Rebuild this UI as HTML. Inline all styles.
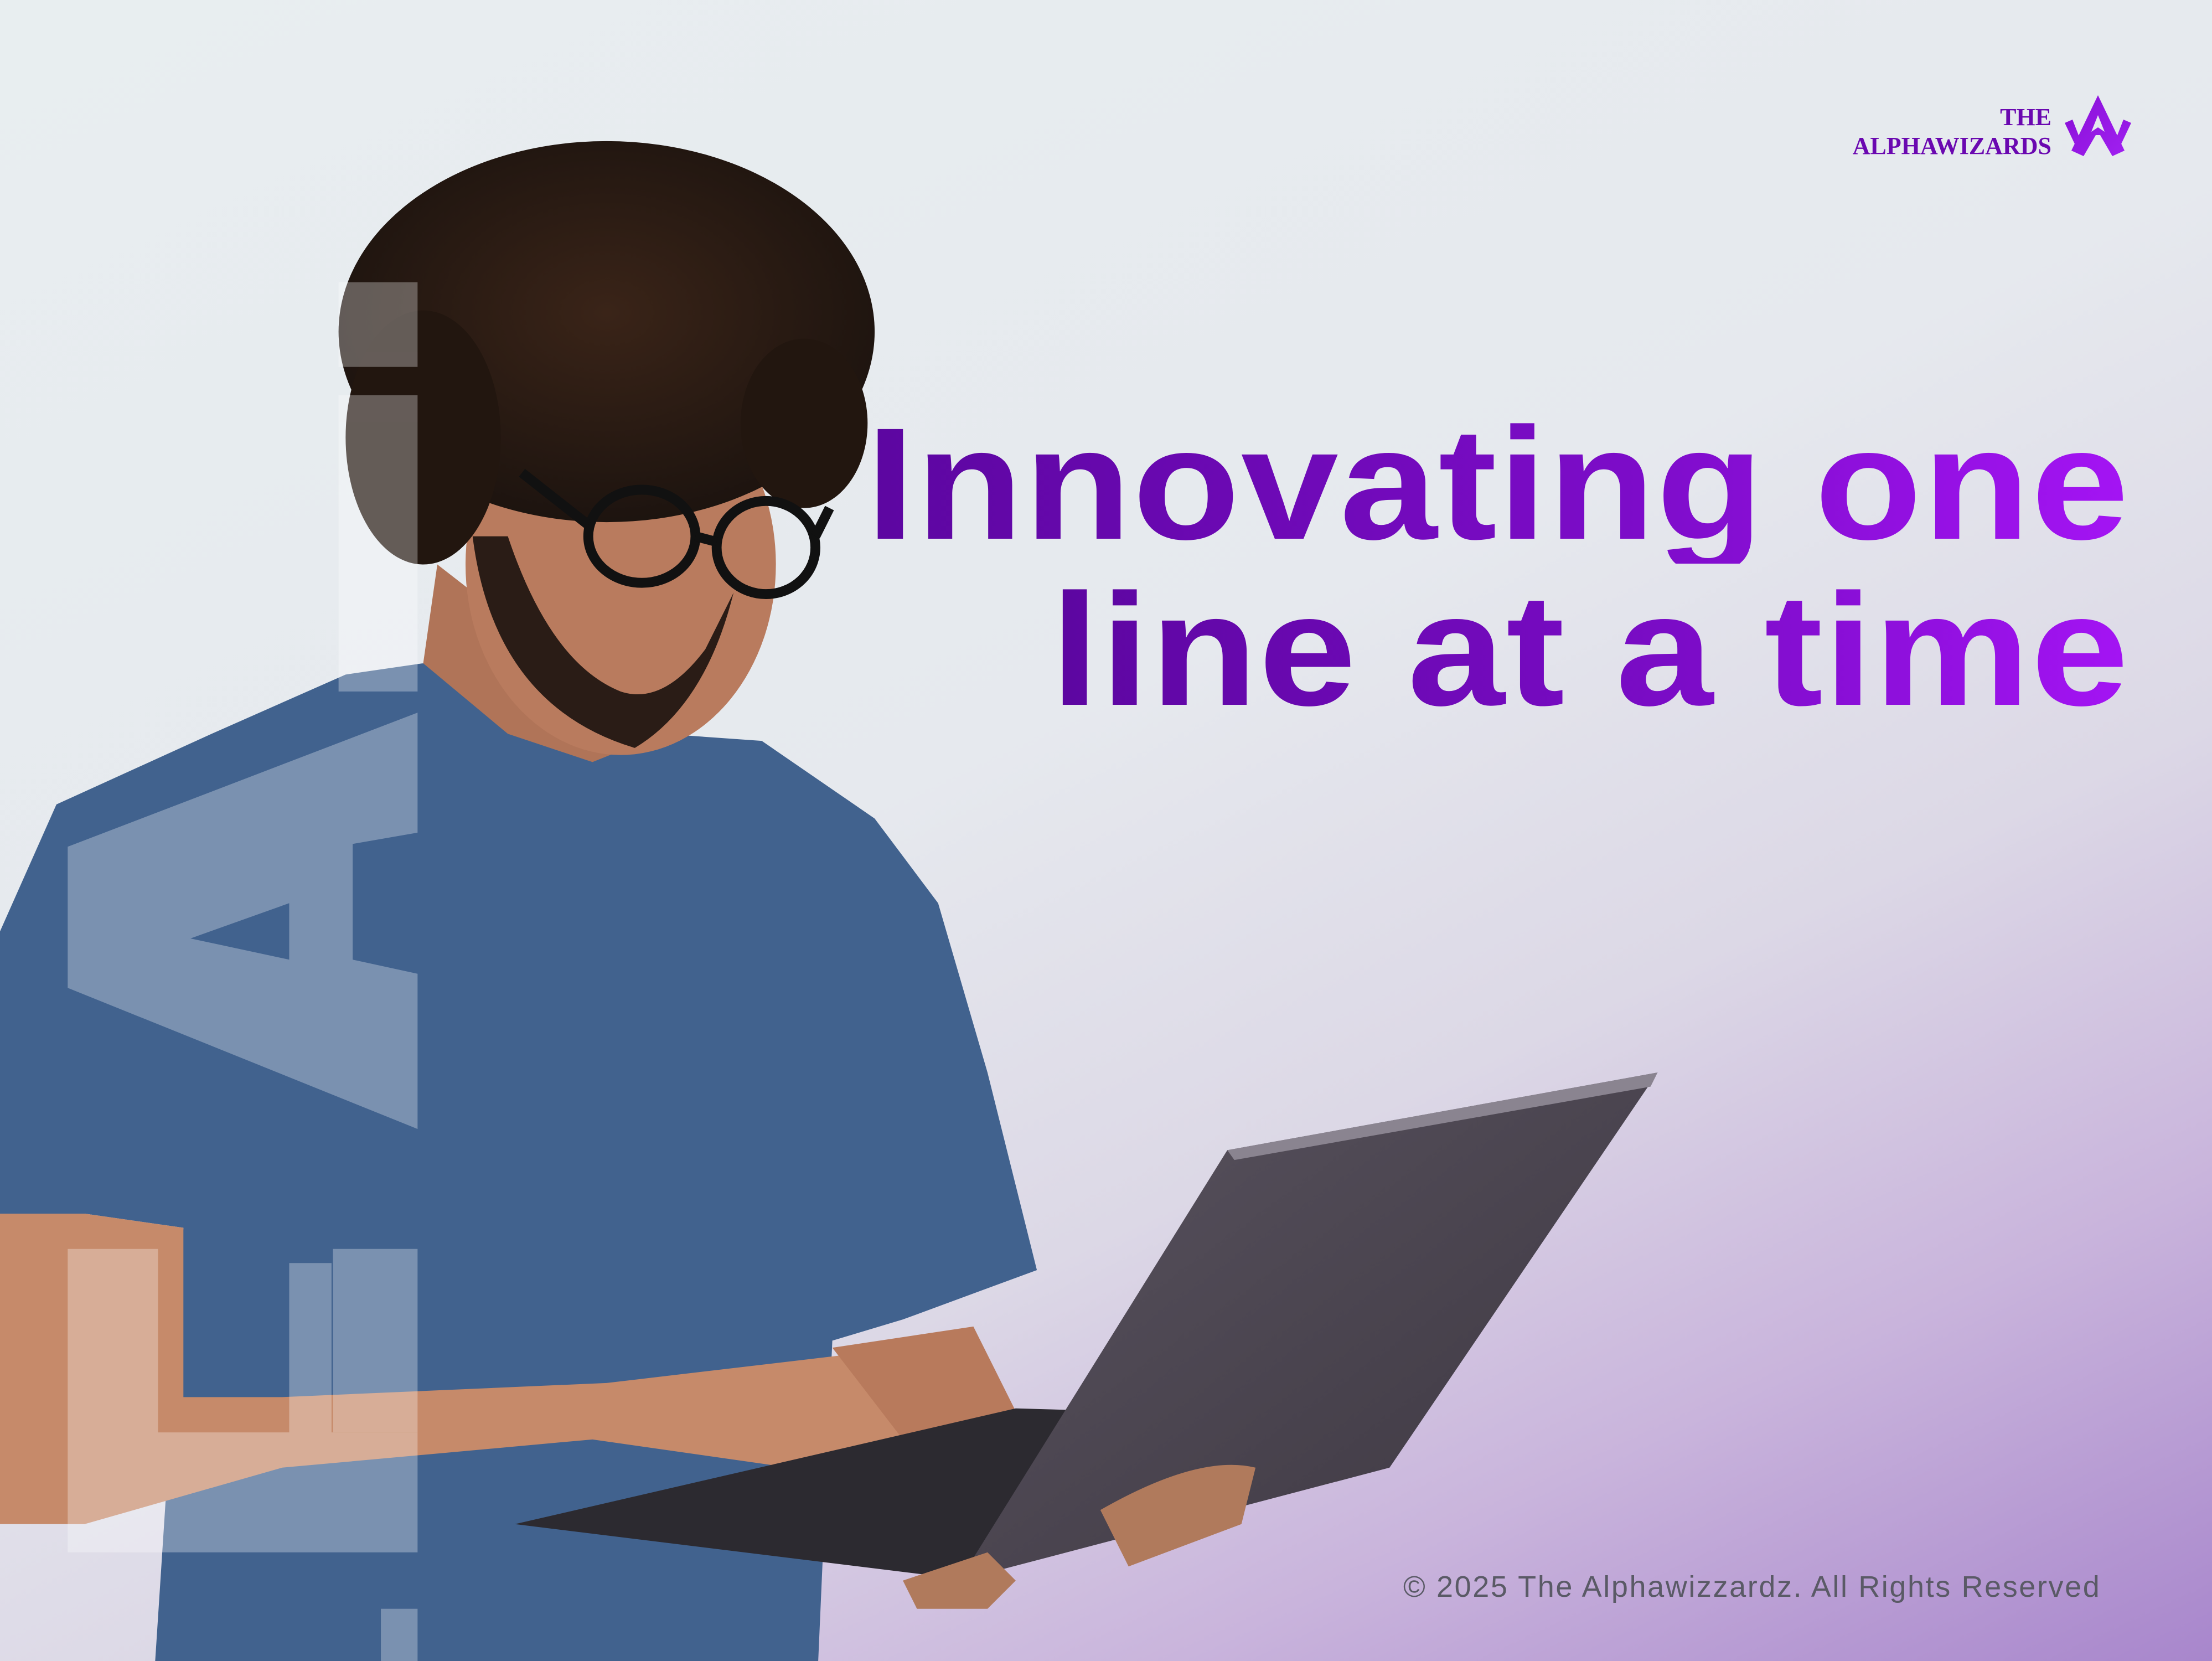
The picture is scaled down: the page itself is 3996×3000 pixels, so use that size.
<!DOCTYPE html>
<html><head><meta charset="utf-8"><style>
html,body{margin:0;padding:0}
body{width:3996px;height:3000px;position:relative;overflow:hidden;
background:linear-gradient(155deg,#e8eef0 0%,#e6e9ee 45%,#dcd8e6 65%,#c9b4dc 82%,#a886cc 100%);
font-family:"Liberation Sans",sans-serif}
svg.art{position:absolute;left:0;top:0;width:3996px;height:3000px}
.h{position:absolute;right:148px;font-weight:700;font-size:288px;line-height:1;letter-spacing:2px;transform:scaleX(1.1);transform-origin:right center;
background:linear-gradient(90deg,#5c06a0,#7c0cc8 60%,#a414f4);-webkit-background-clip:text;background-clip:text;color:transparent;white-space:nowrap}
.logo{position:absolute;font-family:"Liberation Serif",serif;font-weight:700;color:#6a08b0;font-size:44px;text-align:right;line-height:52px;right:290px;top:186px}
.foot{position:absolute;left:2535px;top:2835px;font-size:54px;color:#5a5a66;letter-spacing:2.6px;white-space:nowrap}
</style></head><body>
<svg class="art" viewBox="0 0 1568 1177" preserveAspectRatio="none">
 <defs>
  <radialGradient id="hair" cx="0.5" cy="0.45" r="0.6"><stop offset="0" stop-color="#3a2418"/><stop offset="1" stop-color="#1a120e"/></radialGradient>
  <linearGradient id="lid" x1="0" y1="0" x2="1" y2="1"><stop offset="0" stop-color="#5a5460"/><stop offset="1" stop-color="#3c3640"/></linearGradient>
 </defs>
 <path d="M0 660 L40 570 L150 520 L245 478 L300 470 L370 520 L470 520 L540 525 L620 580 L665 640 L700 760 L735 900 L640 935 L590 950 L580 1177 L110 1177 L130 870 L60 860 L0 860 Z" fill="#41628e"/>
 <path d="M130 870 L60 860 L0 860 L0 1080 L60 1080 L200 1040 L420 1020 L560 1040 L640 1030 L700 1020 L690 980 L600 960 L430 980 L200 990 L130 990 Z" fill="#c68a6a"/>
 <path d="M590 955 L690 940 L720 1000 L640 1020 Z" fill="#b87a5c"/>
 <path d="M300 470 L310 400 L400 470 L470 520 L420 540 L360 520 Z" fill="#b07458"/>
 <ellipse cx="440" cy="400" rx="110" ry="135" fill="#b97b5e"/>
 <path d="M335 380 Q350 500 450 530 Q500 500 520 420 L500 460 Q470 500 440 490 Q390 470 360 380 Z" fill="#2a1c16"/>
 <ellipse cx="430" cy="235" rx="190" ry="135" fill="url(#hair)"/>
 <ellipse cx="300" cy="310" rx="55" ry="90" fill="#22160f"/>
 <ellipse cx="570" cy="300" rx="45" ry="60" fill="#22160f"/>
 <g fill="none" stroke="#111" stroke-width="7">
  <ellipse cx="455" cy="380" rx="38" ry="33"/><ellipse cx="543" cy="388" rx="35" ry="33"/>
  <path d="M493 380 L508 384 M417 372 L370 335 M578 380 L588 360"/></g>
 <path d="M365 1080 L720 998 L790 1000 L690 1120 Z" fill="#2c2a30"/>
 <path d="M870 815 L1175 760 L985 1040 L680 1120 Z" fill="url(#lid)"/>
 <path d="M870 815 L1175 760 L1170 770 L875 822 Z" fill="#8a8490"/>
 <path d="M640 1120 L700 1100 L720 1120 L700 1140 L650 1140 Z" fill="#b07a5c"/>
 <path d="M780 1070 Q850 1030 890 1040 L880 1080 L800 1110 Z" fill="#b07a5c"/>
 <g fill="#ffffff" opacity="0.3">
  <rect x="240" y="200" width="56" height="60"/>
  <rect x="240" y="280" width="56" height="210"/>
  <path d="M48 600 L296 505 L296 590 L250 598 L250 680 L296 690 L296 800 L48 700 Z M135 665 L205 640 L205 680 Z" fill-rule="evenodd"/>
  <path d="M48 885 L112 885 L112 1015 L205 1015 L205 895 L235 895 L235 1015 L296 1015 L296 885 L296 1100 L48 1100 Z"/>
  <rect x="236" y="885" width="60" height="130"/>
  <rect x="270" y="1140" width="26" height="37"/>
 </g>
</svg>
<div class="h" style="top:730px">Innovating one</div>
<div class="h" style="top:1030px">line at a time</div>
<div class="logo">THE<br>ALPHAWIZARDS</div>
<svg style="position:absolute;left:3728px;top:172px;width:124px;height:112px" viewBox="0 0 124 112">
 <defs><linearGradient id="lg" x1="0" y1="0" x2="1" y2="1"><stop offset="0" stop-color="#8a10d8"/><stop offset="1" stop-color="#a020f0"/></linearGradient></defs>
 <path d="M62 0 L110 100 L88 110 L66 72 L58 72 L36 110 L14 100 Z M62 36 L50 66 L62 58 L74 66 Z" fill="url(#lg)" fill-rule="evenodd"/>
 <path d="M2 50 L16 44 L30 80 L20 88 Z M122 50 L108 44 L94 80 L104 88 Z" fill="url(#lg)"/>
</svg>
<div class="foot">© 2025 The Alphawizzardz. All Rights Reserved</div>
</body></html>
